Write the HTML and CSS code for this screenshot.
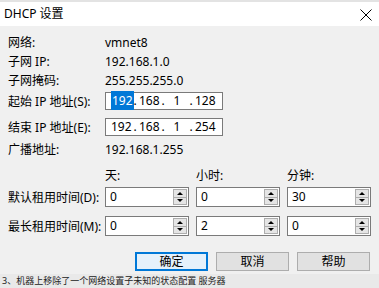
FILE: index.html
```html
<!DOCTYPE html>
<html lang="zh-CN">
<head>
    <meta charset="UTF-8">
    <title>DHCP 设置</title>
    <link rel="stylesheet" href="styles.css">
</head>
<body>
    <div class="dialog">
        <div class="titlebar">
            <span class="title">DHCP 设置</span>
            <svg class="close" width="12" height="12" viewBox="0 0 12 12">
                <path d="M0.5 0.5 L11.5 11.5 M11.5 0.5 L0.5 11.5" stroke="#000" stroke-width="1" fill="none"/>
            </svg>
        </div>
        <div class="content">
            <div class="row"><span class="label">网络:</span><span>vmnet8</span></div>
            <div class="row"><span class="label">子网 IP:</span><span>192.168.1.0</span></div>
            <div class="row"><span class="label">子网掩码:</span><span>255.255.255.0</span></div>

            <div class="row ip-row first">
                <span class="label">起始 IP 地址(S):</span>
                <div class="ipbox">
                    <span class="octet"><span class="selected">192</span></span><span class="dot">.</span>
                    <span class="octet">168</span><span class="dot">.</span>
                    <span class="octet">1</span><span class="dot">.</span>
                    <span class="octet">128</span>
                </div>
            </div>
            <div class="row ip-row">
                <span class="label">结束 IP 地址(E):</span>
                <div class="ipbox">
                    <span class="octet">192</span><span class="dot">.</span>
                    <span class="octet">168</span><span class="dot">.</span>
                    <span class="octet">1</span><span class="dot">.</span>
                    <span class="octet">254</span>
                </div>
            </div>
            <div class="row broadcast"><span class="label">广播地址:</span><span>192.168.1.255</span></div>

            <div class="lease-head">
                <span class="unit">天:</span>
                <span class="unit">小时:</span>
                <span class="unit">分钟:</span>
            </div>
            <div class="lease-row first">
                <span class="label">默认租用时间(D):</span>
                <div class="spin"><span class="value">0</span><span class="arrows"><span class="up"></span><span class="down"></span></span></div>
                <div class="spin"><span class="value">0</span><span class="arrows"><span class="up"></span><span class="down"></span></span></div>
                <div class="spin"><span class="value">30</span><span class="arrows"><span class="up"></span><span class="down"></span></span></div>
            </div>
            <div class="lease-row">
                <span class="label">最长租用时间(M):</span>
                <div class="spin"><span class="value">0</span><span class="arrows"><span class="up"></span><span class="down"></span></span></div>
                <div class="spin"><span class="value">2</span><span class="arrows"><span class="up"></span><span class="down"></span></span></div>
                <div class="spin"><span class="value">0</span><span class="arrows"><span class="up"></span><span class="down"></span></span></div>
            </div>

            <div class="buttons">
                <button class="default">确定</button>
                <button>取消</button>
                <button>帮助</button>
            </div>
        </div>
        <div class="behind">3、机器上移除了一个网络设置子未知的状态配置 服务器</div>
    </div>
</body>
</html>
```

FILE: styles.css
```css
body {
    margin: 0;
    width: 379px;
    height: 288px;
    overflow: hidden;
    font-family: "Noto Sans", "Noto Sans CJK SC", sans-serif;
    font-size: 12px;
    color: #000;
    background: #f0f0f0;
}

.dialog {
    display: flex;
    flex-direction: column;
    height: 288px;
}

.titlebar {
    display: flex;
    align-items: center;
    justify-content: space-between;
    height: 24px;
    border-top: 2px solid #e3e3e3;
    background: #fff;
    padding: 0 7px 0 4px;
}

.title {
    font-size: 12px;
    line-height: 16px;
}

.close {
    display: block;
    margin-top: 1px;
}

.content {
    padding: 7px 0 0 8px;
    height: 240px;
}

.row {
    display: flex;
    align-items: center;
    height: 19px;
    line-height: 19px;
}

.label {
    width: 97px;
    flex-shrink: 0;
    white-space: nowrap;
}

.ip-row {
    height: 18px;
    margin-top: 8px;
}

.ip-row.first {
    margin-top: 2px;
}

.ipbox {
    display: flex;
    align-items: center;
    width: 111px;
    height: 16px;
    padding-left: 5px;
    border: 1px solid #7a7a7a;
    background: #fff;
    line-height: 16px;
}

.octet {
    width: 20px;
    text-align: center;
}

.dot {
    width: 8px;
    text-align: center;
}

.selected {
    background: #0078d7;
    color: #fff;
    padding: 1px 1px;
}

.broadcast {
    margin-top: 4px;
}

/* lease time block */
.lease-head {
    display: flex;
    gap: 7px;
    padding-left: 97px;
    margin-top: 7px;
    height: 19px;
    line-height: 19px;
}

.lease-head .unit {
    width: 84px;
}

.lease-row {
    display: flex;
    align-items: center;
    gap: 7px;
    height: 20px;
    margin-top: 9px;
}

.lease-row.first {
    margin-top: 2px;
}

.lease-row .label {
    width: 90px;
}

.spin {
    display: flex;
    align-items: center;
    box-sizing: border-box;
    width: 84px;
    height: 20px;
    border: 1px solid #7a7a7a;
    background: #fff;
    padding: 1px;
}

.value {
    flex: 1;
    padding-left: 3px;
    line-height: 16px;
}

.arrows {
    display: flex;
    flex-direction: column;
    width: 14px;
    height: 16px;
}

.arrows span {
    flex: 1;
    box-sizing: border-box;
    border: 1px solid #adadad;
    background: #e5e5e5;
    display: flex;
    align-items: center;
    justify-content: center;
}

.arrows .down {
    border-top: none;
}

.arrows .up::after,
.arrows .down::after {
    content: "";
    border-left: 3px solid transparent;
    border-right: 3px solid transparent;
}

.arrows .up::after {
    border-bottom: 3px solid #000;
}

.arrows .down::after {
    border-top: 3px solid #000;
}

.buttons {
    display: flex;
    justify-content: flex-end;
    gap: 8px;
    padding-right: 9px;
    margin-top: 16px;
}

button {
    width: 73px;
    height: 19px;
    padding: 0;
    font-family: "Noto Sans", "Noto Sans CJK SC", sans-serif;
    font-size: 12px;
    line-height: 15px;
    color: #000;
    background: #e1e1e1;
    border: 1px solid #adadad;
}

button.default {
    border: 2px solid #0078d7;
    background: #e5f1fb;
}

/* window behind the dialog, only a sliver shows */
.behind {
    margin-top: auto;
    height: 14px;
    background: #e9e9e9;
    padding-left: 2px;
    font-size: 9px;
    line-height: 13px;
    color: #222;
    white-space: nowrap;
    overflow: hidden;
}
```
